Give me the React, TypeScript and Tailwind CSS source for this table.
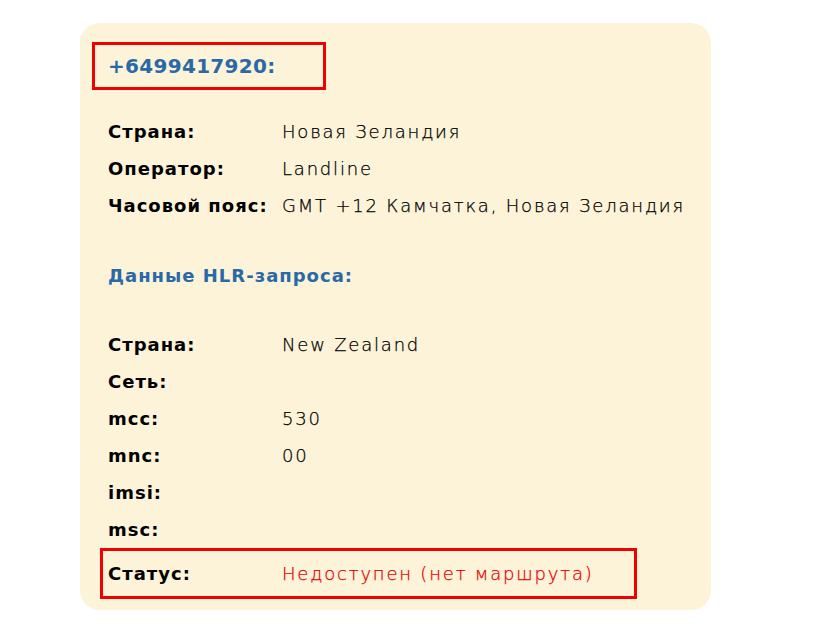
const rows1 = [
  { label: 'Страна:', value: 'Новая Зеландия' },
  { label: 'Оператор:', value: 'Landline' },
  { label: 'Часовой пояс:', value: 'GMT +12 Камчатка, Новая Зеландия' },
]

const rows2 = [
  { label: 'Страна:', value: 'New Zealand' },
  { label: 'Сеть:', value: '' },
  { label: 'mcc:', value: '530' },
  { label: 'mnc:', value: '00' },
  { label: 'imsi:', value: '' },
  { label: 'msc:', value: '' },
]

function Row({ label, value }: { label: string; value: string }) {
  return (
    <div className="grid h-[37px] grid-cols-[174px_1fr] items-center">
      <span className="font-bold tracking-[1px] text-black">{label}</span>
      <span className="font-extralight tracking-[1.8px] text-black [-webkit-text-stroke:0.25px_#000]">{value}</span>
    </div>
  )
}

export default function App() {
  return (
    <div className="min-h-screen bg-white pt-[23px] pl-[80px] font-['DejaVu_Sans','Noto_Sans',sans-serif] text-[18px]">
      <div className="h-[587px] w-[631px] rounded-[20px] bg-[#fdf3d9] pt-[19px]">
        {/* Phone number */}
        <div className="ml-[12px] flex h-[48px] w-[234px] items-center border-[3px] border-[#f00000] pl-[13px]">
          <span className="text-[20px] font-bold tracking-[0.3px] text-[#2a69a8]">+6499417920:</span>
        </div>

        <div className="mt-[23px] ml-[28px]">
          {rows1.map((r) => (
            <Row key={r.label} {...r} />
          ))}
        </div>

        <div className="mt-[33px] ml-[28px] flex h-[37px] items-center font-bold tracking-[1px] text-[#2a69a8]">
          Данные HLR-запроса:
        </div>

        <div className="mt-[32px] ml-[28px]">
          {rows2.map((r) => (
            <Row key={r.label} {...r} />
          ))}
        </div>

        {/* Status */}
        <div className="ml-[20px] grid h-[51px] w-[537px] grid-cols-[174px_1fr] items-center border-[3px] border-[#f00000] pl-[5px]">
          <span className="font-bold tracking-[1px] text-black">Статус:</span>
          <span className="font-extralight tracking-[1.8px] text-[#e60000] [-webkit-text-stroke:0.25px_#e60000]">
            Недоступен (нет маршрута)
          </span>
        </div>
      </div>
    </div>
  )
}
